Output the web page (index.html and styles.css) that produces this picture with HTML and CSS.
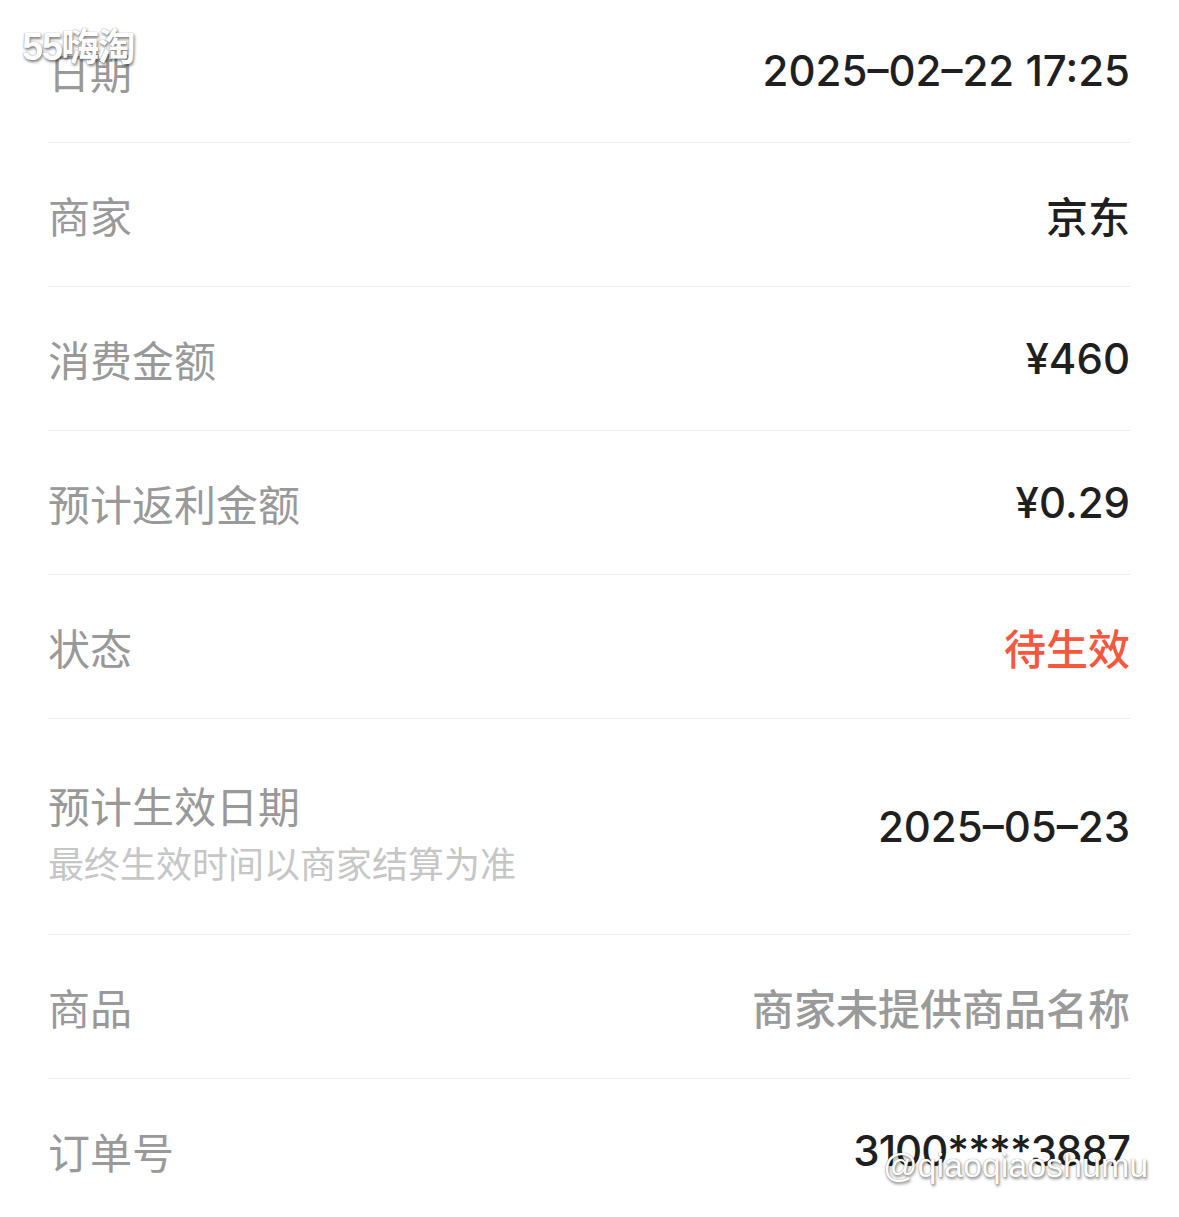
FILE: index.html
```html
<!DOCTYPE html>
<html lang="zh-CN">
<head>
    <meta charset="UTF-8">
    <meta name="viewport" content="width=device-width, initial-scale=1.0">
    <title>订单详情</title>
    <link rel="stylesheet" href="styles.css">
</head>
<body>
    <div class="order-page">
        <!-- Order detail rows -->
        <div class="order-list">
            <div class="order-row">
                <span class="order-label">日期</span>
                <span class="order-value num">2025–02–22 17:25</span>
            </div>
            <div class="order-row">
                <span class="order-label">商家</span>
                <span class="order-value">京东</span>
            </div>
            <div class="order-row">
                <span class="order-label">消费金额</span>
                <span class="order-value num">¥460</span>
            </div>
            <div class="order-row">
                <span class="order-label">预计返利金额</span>
                <span class="order-value num">¥0.29</span>
            </div>
            <div class="order-row">
                <span class="order-label">状态</span>
                <span class="order-value order-value-red">待生效</span>
            </div>
            <div class="order-row order-row-tall">
                <div class="order-label-group">
                    <span class="order-label">预计生效日期</span>
                    <span class="order-sub">最终生效时间以商家结算为准</span>
                </div>
                <span class="order-value num">2025–05–23</span>
            </div>
            <div class="order-row">
                <span class="order-label">商品</span>
                <span class="order-value order-value-grey">商家未提供商品名称</span>
            </div>
            <div class="order-row order-row-last">
                <span class="order-label">订单号</span>
                <span class="order-value num num-tight">3100****3887</span>
            </div>
        </div>

        <!-- Watermarks -->
        <span class="mark mark-top">55嗨淘</span>
        <span class="mark mark-bottom">@qiaoqiaoshumu</span>
    </div>
</body>
</html>
```

FILE: styles.css
```css
html, body {
    margin: 0;
    padding: 0;
    background: #fff;
}

body {
    font-family: "Noto Sans CJK SC", "Noto Sans", sans-serif;
}

.order-page {
    position: relative;
    width: 1179px;
    height: 1217px;
    overflow: hidden;
}

.order-list {
    margin-top: -1px;
    padding: 0 49px 0 48px;
}

.order-row {
    display: flex;
    align-items: center;
    justify-content: space-between;
    height: 143px;
    border-bottom: 1px solid #ebebeb;
}

.order-row-tall {
    height: 215px;
}

.order-row-last {
    border-bottom: none;
}

.order-label-group {
    display: flex;
    flex-direction: column;
    gap: 6px;
    margin-top: 10px;
}

.order-label {
    font-size: 42px;
    line-height: 54px;
    color: #999;
}

.order-sub {
    font-size: 36px;
    line-height: 48px;
    color: #c6c6c6;
}

.order-value {
    font-size: 42px;
    line-height: 54px;
    font-weight: 500;
    color: #1f1f1f;
}

.num {
    font-family: Inter, "Noto Sans CJK SC", sans-serif;
    font-size: 42px;
    font-weight: 500;
}

.num-tight {
    letter-spacing: -1px;
}

.order-value-red {
    color: #f5583f;
}

.order-value-grey {
    color: #9a9a9a;
}

.mark {
    position: absolute;
    color: #fff;
    font-family: "Liberation Sans", "Noto Sans CJK SC", sans-serif;
    text-shadow: 0 0 1px #777, 1px 2px 3px rgba(0, 0, 0, 0.5);
}

.mark-top {
    left: 22px;
    top: 16px;
    font-size: 38px;
    font-weight: bold;
    letter-spacing: -1.5px;
}

.mark-bottom {
    left: 883px;
    top: 1146px;
    font-size: 34px;
}
```
